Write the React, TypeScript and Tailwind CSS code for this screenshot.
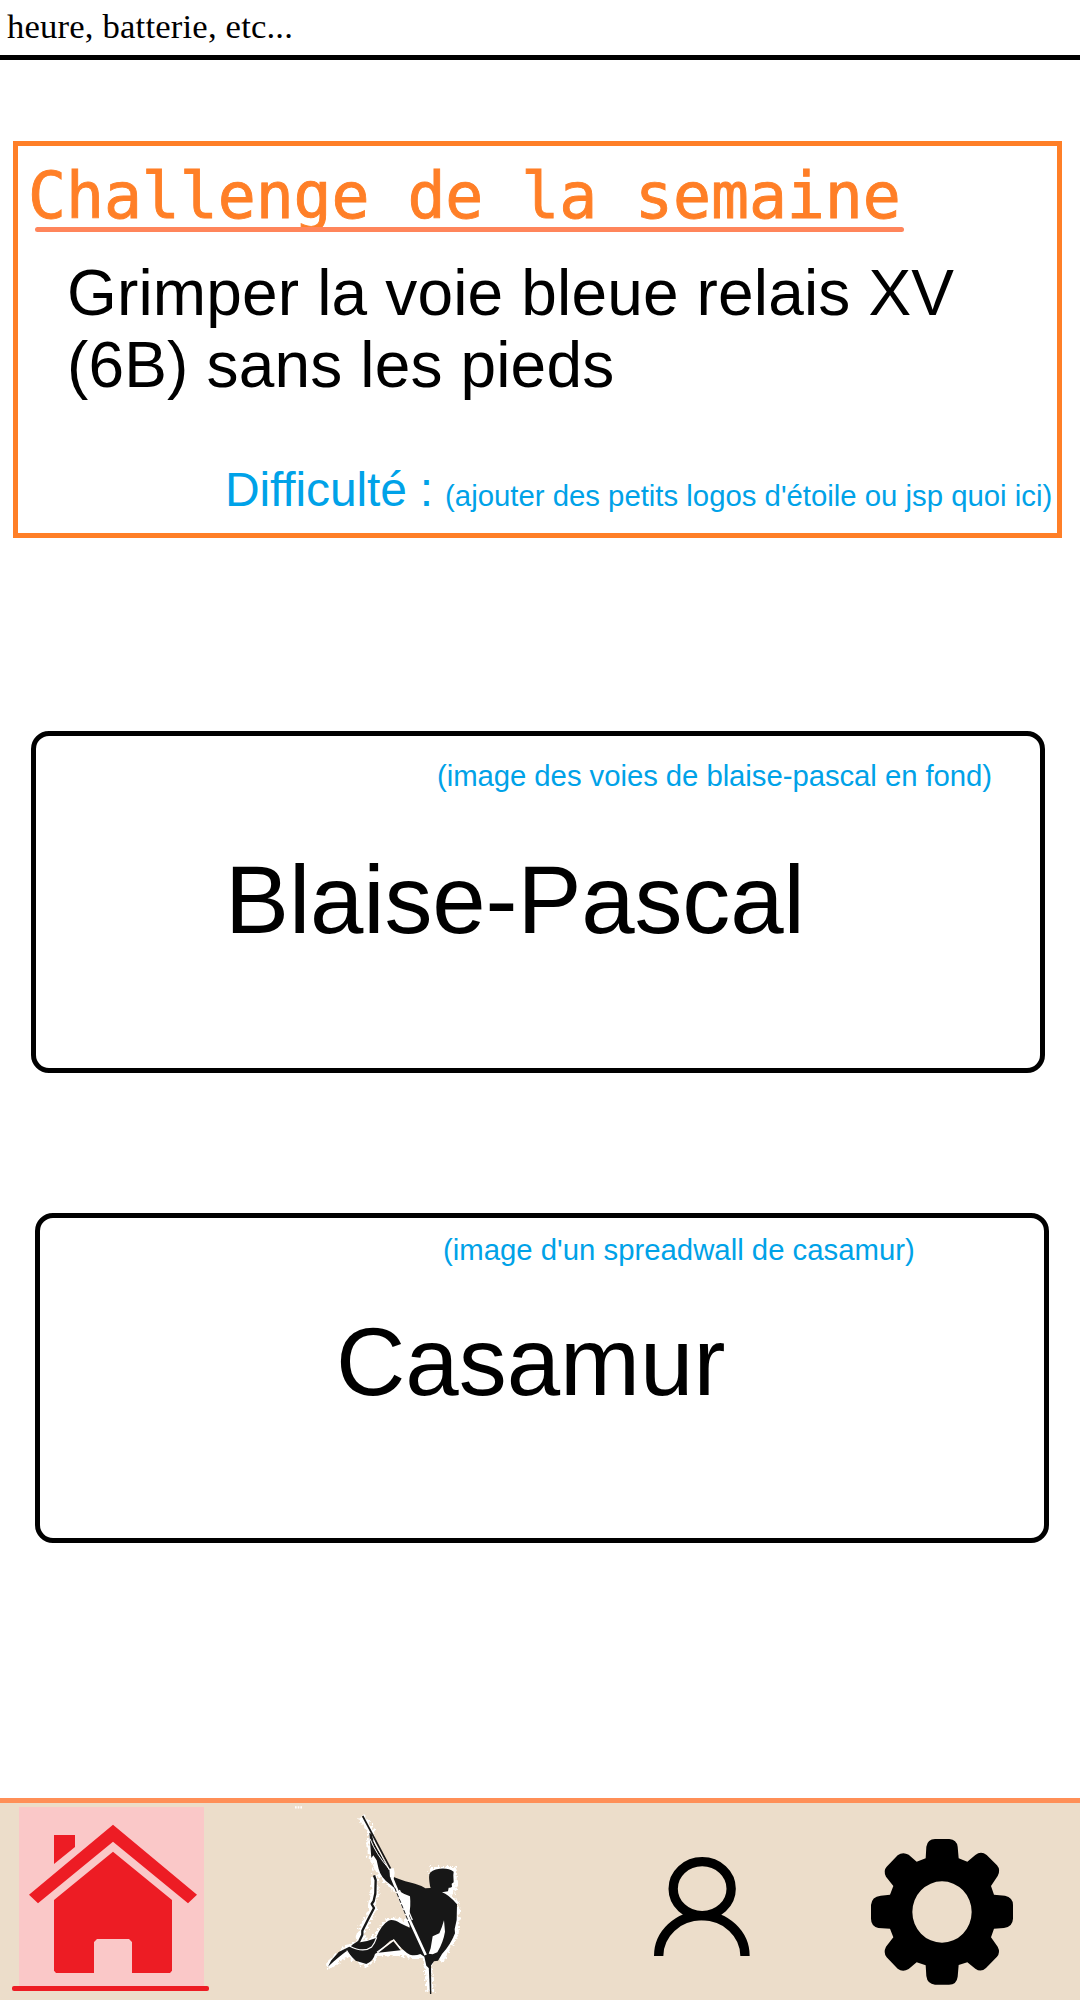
const HALO =
  'M247 80 L272 125 L274 190 L296 240 L340 290 L388 318 L390 400 L345 394 L318 402 L285 450 L205 474 L150 525 L200 488 L258 518 L292 487 L358 484 L395 493 L437 492 L445 530 L450 604 M530 345 L525 430 L480 510 M448 242 L520 242 L518 300 L485 310 L530 345 M283 258 L285 300 L275 345 L280 355 L245 425 L240 455';

function HomeIcon() {
  return (
    <svg className="h-[197px] w-[230px] shrink-0" viewBox="0 39 690 591">
      <rect x="57" y="51" width="555" height="540" fill="#fac8c8" />
      <g fill="#ed1c24">
        <path d="M162 135 H225 V171 L162 222 Z" />
        <path d="M339 104 L591 314 L564 340 L339 155 L114 340 L87 314 Z" />
        <path d="M339 185 L516 330 V542 L510 549 H396 V456 L387 447 H291 L282 456 V549 H168 L162 542 V330 Z" />
        <rect x="36" y="588" width="591" height="15" rx="6" />
      </g>
    </svg>
  );
}

function ClimberIcon() {
  return (
    <svg className="ml-[50px] h-[197px] w-[210px] shrink-0" viewBox="0 39 630 591">
      <defs>
        <filter id="ragged" x="-10%" y="-10%" width="120%" height="120%">
          <feTurbulence type="fractalNoise" baseFrequency="0.11" numOctaves="2" seed="4" result="n" />
          <feDisplacementMap in="SourceGraphic" in2="n" scale="24" xChannelSelector="R" yChannelSelector="G" />
        </filter>
      </defs>
      <path d="M45 52 H66" stroke="#fff" strokeWidth="7" strokeDasharray="5 3" />
      <path d={HALO} fill="none" stroke="#fff" strokeWidth="22" strokeLinejoin="round" filter="url(#ragged)" />
      <path d="M385 312 L394 350 L390 405 L360 340 L345 292 Z M493 392 L495 435 L468 492 L452 490 L462 440 Z" fill="#fff" />
      <g fill="#171717">
        <path d="M268 128 L275 132 Q282 165 302 192 L326 234 L343 262 Q378 276 405 281 Q428 288 436 295 L452 294 L450 288 Q446 266 448 253 Q453 239 479 236 Q505 233 521 245 L520 256 L521 277 L515 281 L516 290 Q513 294 506 293 L504 304 L486 307 Q505 313 531 343 L530 390 L524 417 L525 430 Q511 466 486 492 L474 512 L462 514 L447 535 L439 527 L433 500 L421 492 Q405 499 390 494 Q370 486 342 448 L330 453 L293 487 L285 492 Q280 514 259 522 L227 512 L199 484 Q176 501 144 530 L153 512 L176 486 L232 458 Q260 456 288 444 Q303 405 325 392 Q340 386 361 400 L389 413 L387 375 Q393 350 390 319 Q355 307 330 283 Q303 264 296 237 L290 211 L280 196 L274 204 Z" />
        <path d="M340 454 L362 481 L295 488 Z" />
        <path d="M446 525 L453 525 L454 612 L450 612 Z" />
      </g>
      <path d="M492 391 Q487 410 478 430 L458 439 L452 475 L446 491 L458 493 L472 487 Q490 456 495 425 Z" fill="#fff" />
      <path d="M282 256 L287 270 L286 310 L281 333 L275 342 L282 354 L266 385 L247 422 L247 434 L237 455 L218 468" fill="none" stroke="#171717" strokeWidth="7" strokeLinejoin="round" />
      <path d="M208 468 Q250 490 275 471 Q285 458 290 442 M200 482 L217 508 M291 487 L341 450 L361 475" fill="none" stroke="#fff" strokeWidth="3.5" />
      <path d="M248 78 L332 237" fill="none" stroke="#171717" strokeWidth="5" />
      <path d="M280 151 L328 240" fill="none" stroke="#fff" strokeWidth="3" />
      <path d="M270 146 Q288 192 326 235" fill="none" stroke="#fff" strokeWidth="3" />
      <path d="M328 236 L341 234 L344 249 L341 266 L330 262 Z" fill="#fff" />
      <path d="M335 262 L385 382 L437 495" fill="none" stroke="#fff" strokeWidth="8" />
      <path d="M344 293 L389 404" fill="none" stroke="#171717" strokeWidth="3" strokeDasharray="13 5" />
      <path d="M358 300 L397 390" fill="none" stroke="#fff" strokeWidth="4" />
    </svg>
  );
}

function ProfileIcon() {
  return (
    <svg className="mt-[27px] ml-[140px] h-[150px] w-[140px] shrink-0" viewBox="0 0 420 450" fill="none" stroke="#000" strokeWidth="28">
      <ellipse cx="216.500" cy="176" rx="87" ry="81" />
      <path d="M86 378 A129.500 121 0 0 1 345 378" />
    </svg>
  );
}

function GearIcon() {
  return (
    <svg className="mt-[17px] ml-20 h-[180px] w-[180px] shrink-0" viewBox="0 0 540 540">
      <path
        fillRule="evenodd"
        d="M200 125 L227 115 L229 80 Q233 57 255 57 H298 Q320 59 323 80 L326 115 L352 125 L376 105 Q393 92 410 105 L441 136 Q453 150 443 168 L423 198 L432 224 L465 227 Q489 232 489 255 V296 Q488 320 462 324 L432 326 L423 352 L443 380 Q452 397 441 410 L408 444 Q393 458 376 446 L352 427 L326 435 L323 470 Q320 494 297 494 H255 Q232 492 229 468 L227 436 L200 427 L176 447 Q158 458 143 446 L110 412 Q99 398 108 380 L130 352 L120 326 L85 324 Q63 318 63 296 V255 Q65 230 92 227 L120 224 L130 198 L108 170 Q99 152 110 140 L143 106 Q158 94 176 104 Z M276 184 A89 92 0 1 0 276 368 A89 92 0 1 0 276 184 Z"
      />
    </svg>
  );
}

export default function App() {
  return (
    <div className="flex h-[2000px] w-[1080px] flex-col overflow-hidden bg-white font-['Liberation_Sans',Arial,sans-serif] text-black">
      <header className="h-[60px] shrink-0 border-b-[5px] border-black pt-1.5 pl-[7px] font-['Liberation_Serif',serif] text-[34.67px] leading-10 tracking-[0.18px]">
        heure, batterie, etc...
      </header>

      <section className="mt-[81px] ml-[13px] h-[397px] w-[1049px] shrink-0 border-[5px] border-[#ff7f27] pt-[13px]">
        <h1 className="h-[68px] pl-2.5 font-['DejaVu_Sans_Mono',monospace] text-[63.2px] leading-[74px] tracking-[-0.1px] whitespace-nowrap text-[#ff7f27] [-webkit-text-stroke:0.9px_#ff7f27]">
          Challenge de la semaine
        </h1>
        <div className="relative ml-[17px] h-[5px] w-[869px] rounded-full bg-[#ff855b]" />
        <p className="mt-[25px] ml-[49px] text-[64px] leading-[72px] tracking-[0.16px] whitespace-nowrap">
          Grimper la voie bleue relais XV
          <br />
          (6B) sans les pieds
        </p>
        <div className="mt-[61px] ml-[207px] flex items-baseline gap-3 leading-[56px] whitespace-nowrap text-[#00a2e8]">
          <span className="text-[48px] tracking-[-0.15px] [font-variant-ligatures:none]">Difficulté :</span>
          <span className="text-[29.33px]">(ajouter des petits logos d'étoile ou jsp quoi ici)</span>
        </div>
      </section>

      <section className="mt-[193px] ml-[31px] h-[342px] w-[1014px] shrink-0 rounded-[18px] border-[5px] border-black pt-[23px] whitespace-nowrap">
        <p className="ml-[401px] text-[29.33px] leading-[34px] tracking-[-0.06px] text-[#00a2e8]">(image des voies de blaise-pascal en fond)</p>
        <h2 className="mt-[53px] ml-[189px] text-[96px] leading-[108px] tracking-[-0.15px]">Blaise-Pascal</h2>
      </section>

      <section className="mt-[140px] ml-[35px] h-[330px] w-[1014px] shrink-0 rounded-[18px] border-[5px] border-black pt-[15px] whitespace-nowrap">
        <p className="ml-[403px] text-[29.33px] leading-[34px] text-[#00a2e8]">(image d'un spreadwall de casamur)</p>
        <h2 className="mt-[41px] ml-[296px] text-[96px] leading-[108px]">Casamur</h2>
      </section>

      <nav className="mt-[255px] flex h-[202px] shrink-0 items-start border-t-[5px] border-[#ff8f57] bg-[#ecddca]">
        <HomeIcon />
        <ClimberIcon />
        <ProfileIcon />
        <GearIcon />
      </nav>
    </div>
  );
}
